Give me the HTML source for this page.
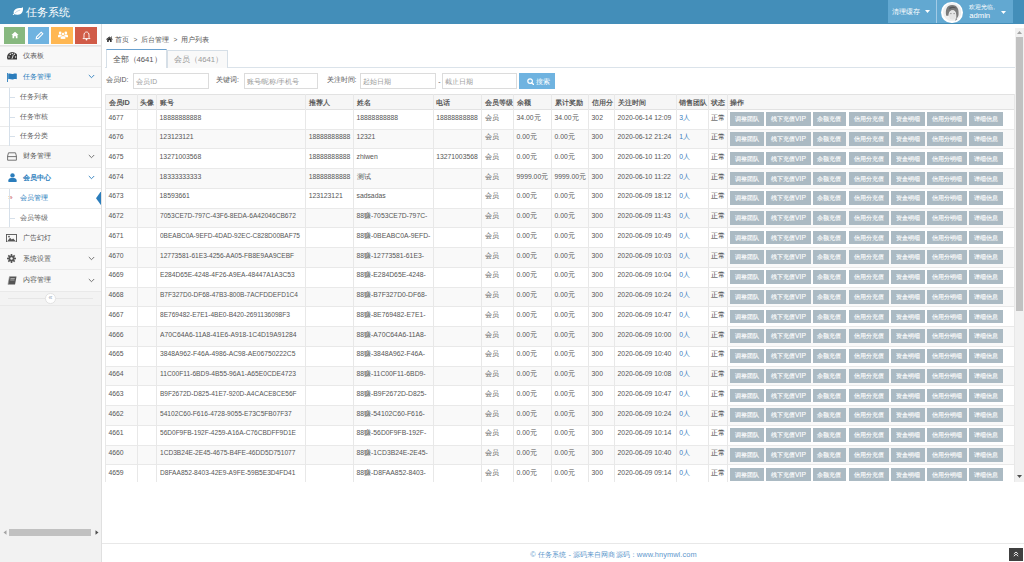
<!DOCTYPE html>
<html><head><meta charset="utf-8"><style>
*{box-sizing:border-box}
html,body{margin:0;padding:0;width:1024px;height:562px;overflow:hidden;background:#fff;font-family:"Liberation Sans",sans-serif;color:#393939}
.a{position:absolute}
#side{position:absolute;left:0;top:24px;width:102px;height:538px;background:#f2f2f2;border-right:1px solid #e0e0e0}
#clip{position:absolute;left:0;top:0;width:1015px;height:482px;overflow:hidden}
#vs{position:absolute;left:1015px;top:28px;width:9px;height:454px;background:#f1f1f1}
#vthumb{position:absolute;left:1px;top:9px;width:7px;height:273.6px;background:#c1c1c1}
#foot{position:absolute;left:102px;top:543px;width:922px;height:19px;border-top:1px solid #e8e8e8;background:#fff}
.th{position:absolute;left:105.5px;width:909.1px;background:#f6f6f6;border-top:1px solid #e2e2e2;border-bottom:1px solid #e2e2e2}
.tr{position:absolute;left:105.5px;width:909.1px;background:#fff;border-bottom:1px solid #e9e9e9}
.tr.odd{background:#f9f9f9}
.vl{position:absolute;width:1px;height:400px;background:#e8e8e8}
.c{font-size:6.5px}
.ch{font-size:6.5px}
.cb{font-size:6.2px}
.tht{position:absolute;font-size:7.3px;font-weight:bold;color:#555;white-space:nowrap}
.td{position:absolute;font-size:6.8px;line-height:8px;color:#555;white-space:nowrap}
.lnk{color:#3a7cc0}
.dk{color:#333}
.btn{position:absolute;height:13.7px;-webkit-text-stroke:0.12px #fff;background:#abbac3;color:#fff;font-size:6.7px;line-height:13.6px;text-align:center;white-space:nowrap}
.stx{position:absolute;font-size:6.9px;line-height:10px;white-space:nowrap}
.inp{border:1px solid #dcdcdc;background:#fff}
.ph{font-size:6.8px;line-height:9px;color:#999;white-space:nowrap}
.sep{display:inline-block;font-size:6.6px;margin:0 4.1px 0 4.2px;color:#555}
.lbl{font-size:6.9px;line-height:9px;color:#555;white-space:nowrap}
</style></head><body>
<div id="side"></div>
<div class="a" style="left:0;top:24px;width:101px;height:21.5px;background:#fdfdfd;border-bottom:1px solid #e3e3e3"></div>
<div class="a" style="left:4.1px;top:26.7px;width:21.4px;height:17px;background:#87b87f"></div>
<div class="a" style="left:27.9px;top:26.7px;width:21.6px;height:17px;background:#6fb3e0"></div>
<div class="a" style="left:51.2px;top:26.7px;width:21.7px;height:17px;background:#ffb752"></div>
<div class="a" style="left:75.1px;top:26.7px;width:21.9px;height:17px;background:#d15b47"></div>
<svg class="a" style="left:11px;top:31px" width="8" height="8" viewBox="0 0 8 8"><path d="M4 0.8 L7.6 4 H6.5 V7.2 H4.8 V5.2 H3.2 V7.2 H1.5 V4 H0.4 Z" fill="#fff"/></svg>
<svg class="a" style="left:34.5px;top:31px" width="9" height="9" viewBox="0 0 9 9"><path d="M1.2 7.8 L1.6 5.8 L6.2 1.2 L7.8 2.8 L3.2 7.4 Z" fill="none" stroke="#fff" stroke-width="1.1"/></svg>
<svg class="a" style="left:57.5px;top:30.8px" width="10" height="8.5" viewBox="0 0 10 8.5"><circle cx="2.2" cy="1.9" r="1.4" fill="#fff"/><circle cx="7.8" cy="1.9" r="1.4" fill="#fff"/><path d="M0 6.2 V4.8 C0 3.8 1 3.4 2.2 3.4 C3.4 3.4 4 3.8 4 4.8 V6.2 Z M6 6.2 V4.8 C6 3.8 6.6 3.4 7.8 3.4 C9 3.4 10 3.8 10 4.8 V6.2 Z" fill="#fff"/><circle cx="5" cy="3" r="1.6" fill="#fff" stroke="#ffb752" stroke-width="0.5"/><path d="M2.4 8.3 V6.6 C2.4 5.3 3.6 4.8 5 4.8 C6.4 4.8 7.6 5.3 7.6 6.6 V8.3 Z" fill="#fff" stroke="#ffb752" stroke-width="0.5"/></svg>
<svg class="a" style="left:81.5px;top:30.5px" width="9" height="10" viewBox="0 0 9 10"><path d="M4.5 1 C2.6 1 2 2.6 2 4.2 V6.4 L1 7.6 H8 L7 6.4 V4.2 C7 2.6 6.4 1 4.5 1 Z" fill="none" stroke="#fff" stroke-width="0.9"/><circle cx="4.5" cy="8.6" r="0.9" fill="#fff"/></svg>
<div class="a" style="left:0;top:45.6px;width:101px;height:20.7px;background:#f8f8f8;border-top:1px solid #ebebeb"></div>
<div class="stx" style="left:23.3px;top:51.0px;color:#585858;">仪表板</div>
<svg class="a" style="left:6.8px;top:52.4px" width="10.6" height="7.6" viewBox="0 0 10.6 7.6"><path d="M0.6 7.4 C0 6.4 0 5.8 0 5.3 A5.3 5.3 0 0 1 10.6 5.3 C10.6 5.8 10.6 6.4 10 7.4 Z" fill="#3d3d3d"/><circle cx="2" cy="5" r="0.75" fill="#eee"/><circle cx="3.3" cy="2.3" r="0.75" fill="#eee"/><circle cx="5.3" cy="1.5" r="0.7" fill="#eee"/><circle cx="7.3" cy="2.3" r="0.75" fill="#eee"/><circle cx="8.6" cy="5" r="0.75" fill="#eee"/><path d="M5 6.8 L6.3 3" stroke="#eee" stroke-width="0.9"/></svg>
<div class="a" style="left:0;top:66.3px;width:101px;height:21.0px;background:#f8f8f8;border-top:1px solid #ebebeb"></div>
<div class="stx" style="left:23.3px;top:71.8px;color:#2b7dbc;">任务管理</div>
<svg class="a" style="left:88px;top:74.3px" width="7" height="5" viewBox="0 0 7 5"><path d="M0.8 1 L3.5 3.7 L6.2 1" fill="none" stroke="#2b7dbc" stroke-width="0.9"/></svg>
<svg class="a" style="left:7.4px;top:72.8px" width="10" height="9" viewBox="0 0 10 9"><rect x="0" y="0" width="0.9" height="9" fill="#2b7dbc"/><path d="M1.2 0.8 C3 0 4.5 1.4 6 1 C7.5 0.6 8.5 0.4 9.8 0.8 V6.2 C8.5 5.8 7.5 6 6 6.4 C4.5 6.8 3 5.4 1.2 6.2 Z" fill="#2b7dbc"/></svg>
<div class="a" style="left:0;top:87.3px;width:101px;height:20.0px;background:#fff;border-top:1px solid #ebebeb"></div>
<div class="stx" style="left:20px;top:92.3px;color:#616161">任务列表</div>
<div class="a" style="left:9.9px;top:97.3px;width:5px;height:1px;background:#d6e0ea"></div>
<div class="a" style="left:0;top:107.3px;width:101px;height:18.7px;background:#fff;border-top:1px solid #ebebeb"></div>
<div class="stx" style="left:20px;top:111.7px;color:#616161">任务审核</div>
<div class="a" style="left:9.9px;top:116.7px;width:5px;height:1px;background:#d6e0ea"></div>
<div class="a" style="left:0;top:126.0px;width:101px;height:19.0px;background:#fff;border-top:1px solid #ebebeb"></div>
<div class="stx" style="left:20px;top:130.5px;color:#616161">任务分类</div>
<div class="a" style="left:9.9px;top:135.5px;width:5px;height:1px;background:#d6e0ea"></div>
<div class="a" style="left:0;top:145.0px;width:101px;height:22.0px;background:#f8f8f8;border-top:1px solid #ebebeb"></div>
<div class="stx" style="left:23.3px;top:151.0px;color:#585858;">财务管理</div>
<svg class="a" style="left:88px;top:153.5px" width="7" height="5" viewBox="0 0 7 5"><path d="M0.8 1 L3.5 3.7 L6.2 1" fill="none" stroke="#666" stroke-width="0.9"/></svg>
<svg class="a" style="left:7px;top:152.0px" width="10" height="9" viewBox="0 0 10 9"><path d="M1.5 0.8 H8.5 L9.4 4 V8.2 H0.6 V4 Z" fill="none" stroke="#666" stroke-width="0.9"/><path d="M0.6 4.6 H9.4" stroke="#666" stroke-width="0.9"/></svg>
<div class="a" style="left:0;top:167.0px;width:101px;height:21.0px;background:#fff;border-top:1px solid #ebebeb"></div>
<div class="stx" style="left:23.3px;top:172.5px;color:#2b7dbc;font-weight:bold">会员中心</div>
<svg class="a" style="left:88px;top:175.0px" width="7" height="5" viewBox="0 0 7 5"><path d="M0.8 1 L3.5 3.7 L6.2 1" fill="none" stroke="#2b7dbc" stroke-width="0.9"/></svg>
<svg class="a" style="left:7.5px;top:173.0px" width="9" height="9" viewBox="0 0 9 9"><circle cx="4.5" cy="2.4" r="2.2" fill="#2b7dbc"/><path d="M0.4 9 V7.2 C0.4 5.6 2 5 4.5 5 C7 5 8.6 5.6 8.6 7.2 V9 Z" fill="#2b7dbc"/></svg>
<div class="a" style="left:0;top:188.0px;width:101px;height:20.4px;background:#fff;border-top:1px solid #ebebeb"></div>
<div class="stx" style="left:20px;top:193.2px;color:#2b7dbc">会员管理</div>
<div class="a" style="left:8.2px;top:193.0px;font-size:8px;line-height:10px;color:#d0605a;font-family:'Liberation Sans',sans-serif">»</div>
<svg class="a" style="left:96px;top:191.0px" width="5.2" height="14.4" viewBox="0 0 5.2 14.4"><path d="M5.2 0 L0 7.2 L5.2 14.4 Z" fill="#2b7dbc"/></svg>
<div class="a" style="left:0;top:208.4px;width:101px;height:19.0px;background:#fff;border-top:1px solid #ebebeb"></div>
<div class="stx" style="left:20px;top:212.9px;color:#616161">会员等级</div>
<div class="a" style="left:9.9px;top:217.9px;width:5px;height:1px;background:#d6e0ea"></div>
<div class="a" style="left:0;top:227.4px;width:101px;height:20.8px;background:#f8f8f8;border-top:1px solid #ebebeb"></div>
<div class="stx" style="left:23.3px;top:232.8px;color:#585858;">广告幻灯</div>
<svg class="a" style="left:6.2px;top:233.8px" width="11" height="8.5" viewBox="0 0 11 8.5"><rect x="0.5" y="0.5" width="10" height="7.5" fill="none" stroke="#555" stroke-width="0.9"/><path d="M1.5 7 L4 3.8 L5.8 5.6 L7.2 4.4 L9.5 7 Z" fill="#555"/><circle cx="3" cy="2.6" r="0.9" fill="#555"/></svg>
<div class="a" style="left:0;top:248.2px;width:101px;height:21.0px;background:#f8f8f8;border-top:1px solid #ebebeb"></div>
<div class="stx" style="left:23.3px;top:253.7px;color:#585858;">系统设置</div>
<svg class="a" style="left:88px;top:256.2px" width="7" height="5" viewBox="0 0 7 5"><path d="M0.8 1 L3.5 3.7 L6.2 1" fill="none" stroke="#666" stroke-width="0.9"/></svg>
<svg class="a" style="left:7.3px;top:254.2px" width="9" height="9" viewBox="0 0 9 9"><g fill="#555"><circle cx="4.5" cy="4.5" r="3"/><rect x="3.7" y="0" width="1.6" height="9" transform="rotate(0 4.5 4.5)"/><rect x="3.7" y="0" width="1.6" height="9" transform="rotate(45 4.5 4.5)"/><rect x="3.7" y="0" width="1.6" height="9" transform="rotate(90 4.5 4.5)"/><rect x="3.7" y="0" width="1.6" height="9" transform="rotate(135 4.5 4.5)"/></g><circle cx="4.5" cy="4.5" r="1.2" fill="#f8f8f8"/></svg>
<div class="a" style="left:0;top:269.2px;width:101px;height:21.7px;background:#f8f8f8;border-top:1px solid #ebebeb"></div>
<div class="stx" style="left:23.3px;top:275.0px;color:#585858;">内容管理</div>
<svg class="a" style="left:88px;top:277.5px" width="7" height="5" viewBox="0 0 7 5"><path d="M0.8 1 L3.5 3.7 L6.2 1" fill="none" stroke="#666" stroke-width="0.9"/></svg>
<svg class="a" style="left:7px;top:275.5px" width="10" height="9" viewBox="0 0 10 9"><path d="M2.5 0.5 H9.5 L8 8.5 H1 Z" fill="#555"/><path d="M1 8.5 L2.5 0.5" stroke="#888" stroke-width="0.6"/><path d="M3.5 2.5 H7.8 M3.2 4 H7.5" stroke="#f8f8f8" stroke-width="0.5"/></svg>
<div class="a" style="left:9px;top:87.5px;width:1px;height:58px;background:#d6e0ea"></div>
<div class="a" style="left:9px;top:188.7px;width:1px;height:38.7px;background:#d6e0ea"></div>
<div class="a" style="left:0;top:290.9px;width:101px;height:15px;background:#f3f3f3;border-top:1px solid #e9e9e9;border-bottom:1px solid #e9e9e9"></div>
<div class="a" style="left:7.5px;top:298.3px;width:85.5px;height:1px;background:#e6e6e6"></div>
<div class="a" style="left:45.2px;top:293.3px;width:10.6px;height:10.6px;border-radius:50%;background:#fff;border:1px solid #e3e3e3;font-size:7px;line-height:8.4px;text-align:center;color:#9aa9b8">«</div>
<div class="a" style="left:9px;top:529.1px;width:81.8px;height:6.7px;background:#c1c1c1"></div>
<svg class="a" style="left:2.5px;top:530px" width="4" height="5" viewBox="0 0 4 5"><path d="M3.5 0.2 L0.5 2.5 L3.5 4.8 Z" fill="#a3a3a3"/></svg>
<svg class="a" style="left:94.5px;top:530px" width="4" height="5" viewBox="0 0 4 5"><path d="M0.5 0.2 L3.5 2.5 L0.5 4.8 Z" fill="#505050"/></svg>
<div id="clip">
<svg class="a" style="left:105.8px;top:35.8px" width="6.8" height="6" viewBox="0 0 7 6"><path d="M3.5 0.3 L7 3.3 L6.4 3.9 L3.5 1.4 L0.6 3.9 L0 3.3 Z M5.3 0.4 H6.1 V2 L5.3 1.4 Z M1.2 3.5 L3.5 1.8 L5.8 3.5 V6 H4.2 V4.3 H2.8 V6 H1.2 Z" fill="#2a2a2a"/></svg>
<div class="a" style="left:115.2px;top:35px;font-size:7.4px;line-height:9px;color:#555;white-space:nowrap">首页<span class="sep">&gt;</span>后台管理<span class="sep">&gt;</span>用户列表</div>
<div class="a" style="left:105px;top:67.2px;width:910px;height:1px;background:#dbe3ea"></div>
<div class="a" style="left:166.6px;top:50.2px;width:61.3px;height:17.5px;background:#f9f9f9;border:1px solid #d6dfe7;border-bottom:none"></div>
<div class="a" style="left:105.6px;top:49.2px;width:61.5px;height:19px;background:#fff;border:1px solid #d6dfe7;border-top:1.6px solid #6aa1cf;border-bottom:none"></div>
<div class="a" style="left:112.5px;top:54.6px;font-size:7.7px;line-height:9px;color:#555;white-space:nowrap">全部（4641）</div>
<div class="a" style="left:173.9px;top:54.6px;font-size:7.7px;line-height:9px;color:#999;white-space:nowrap">会员（4641）</div>
<div class="a lbl" style="left:105.6px;top:75.3px">会员ID:</div>
<div class="a inp" style="left:133.3px;top:73.2px;width:75.3px;height:15.5px"></div><div class="a ph" style="left:136.3px;top:76.6px">会员ID</div>
<div class="a lbl" style="left:216px;top:75.3px">关键词:</div>
<div class="a inp" style="left:243.6px;top:73.2px;width:74.9px;height:15.5px"></div><div class="a ph" style="left:246.6px;top:76.6px">账号/昵称/手机号</div>
<div class="a lbl" style="left:326.6px;top:75.3px">关注时间:</div>
<div class="a inp" style="left:360.3px;top:73.2px;width:75.4px;height:15.5px"></div><div class="a ph" style="left:363.3px;top:76.6px">起始日期</div>
<div class="a lbl" style="left:438.2px;top:77px">-</div>
<div class="a inp" style="left:442.3px;top:73.2px;width:74.9px;height:15.5px"></div><div class="a ph" style="left:445.3px;top:76.6px">截止日期</div>
<div class="a" style="left:519.2px;top:73.2px;width:35.5px;height:15.5px;background:#6fb3e0"></div>
<svg class="a" style="left:526.5px;top:77.5px" width="7.6" height="7.6" viewBox="0 0 7.6 7.6"><circle cx="3.1" cy="3.1" r="2.3" fill="none" stroke="#fff" stroke-width="1.2"/><path d="M4.8 4.8 L7 7" stroke="#fff" stroke-width="1.4" stroke-linecap="round"/></svg>
<div class="a" style="left:535.8px;top:76.6px;font-size:6.9px;line-height:9px;color:#fff;white-space:nowrap">搜索</div>
<div class="th" style="top:94px;height:16px"></div>
<div class="tr" style="top:110.00px;height:19.74px"></div>
<div class="tr odd" style="top:129.74px;height:19.74px"></div>
<div class="tr" style="top:149.48px;height:19.74px"></div>
<div class="tr odd" style="top:169.22px;height:19.74px"></div>
<div class="tr" style="top:188.96px;height:19.74px"></div>
<div class="tr odd" style="top:208.70px;height:19.74px"></div>
<div class="tr" style="top:228.44px;height:19.74px"></div>
<div class="tr odd" style="top:248.18px;height:19.74px"></div>
<div class="tr" style="top:267.92px;height:19.74px"></div>
<div class="tr odd" style="top:287.66px;height:19.74px"></div>
<div class="tr" style="top:307.40px;height:19.74px"></div>
<div class="tr odd" style="top:327.14px;height:19.74px"></div>
<div class="tr" style="top:346.88px;height:19.74px"></div>
<div class="tr odd" style="top:366.62px;height:19.74px"></div>
<div class="tr" style="top:386.36px;height:19.74px"></div>
<div class="tr odd" style="top:406.10px;height:19.74px"></div>
<div class="tr" style="top:425.84px;height:19.74px"></div>
<div class="tr odd" style="top:445.58px;height:19.74px"></div>
<div class="tr" style="top:465.32px;height:19.74px"></div>
<div class="vl" style="left:105.0px;top:94px"></div>
<div class="vl" style="left:136.9px;top:94px"></div>
<div class="vl" style="left:156.1px;top:94px"></div>
<div class="vl" style="left:305.2px;top:94px"></div>
<div class="vl" style="left:353.0px;top:94px"></div>
<div class="vl" style="left:432.7px;top:94px"></div>
<div class="vl" style="left:481.3px;top:94px"></div>
<div class="vl" style="left:513.1px;top:94px"></div>
<div class="vl" style="left:551.0px;top:94px"></div>
<div class="vl" style="left:588.1px;top:94px"></div>
<div class="vl" style="left:614.1px;top:94px"></div>
<div class="vl" style="left:675.7px;top:94px"></div>
<div class="vl" style="left:707.9px;top:94px"></div>
<div class="vl" style="left:726.8px;top:94px"></div>
<div class="vl" style="left:1014.1px;top:94px"></div>
<div class="tht" style="left:108.5px;top:94.5px;height:16px;line-height:16px"><span class="ch">会员</span>ID</div>
<div class="tht" style="left:140.4px;top:94.5px;height:16px;line-height:16px"><span class="ch">头像</span></div>
<div class="tht" style="left:159.6px;top:94.5px;height:16px;line-height:16px"><span class="ch">账号</span></div>
<div class="tht" style="left:308.7px;top:94.5px;height:16px;line-height:16px"><span class="ch">推荐人</span></div>
<div class="tht" style="left:356.5px;top:94.5px;height:16px;line-height:16px"><span class="ch">姓名</span></div>
<div class="tht" style="left:436.2px;top:94.5px;height:16px;line-height:16px"><span class="ch">电话</span></div>
<div class="tht" style="left:484.8px;top:94.5px;height:16px;line-height:16px"><span class="ch">会员等级</span></div>
<div class="tht" style="left:516.6px;top:94.5px;height:16px;line-height:16px"><span class="ch">余额</span></div>
<div class="tht" style="left:554.5px;top:94.5px;height:16px;line-height:16px"><span class="ch">累计奖励</span></div>
<div class="tht" style="left:591.6px;top:94.5px;height:16px;line-height:16px"><span class="ch">信用分</span></div>
<div class="tht" style="left:617.6px;top:94.5px;height:16px;line-height:16px"><span class="ch">关注时间</span></div>
<div class="tht" style="left:679.2px;top:94.5px;height:16px;line-height:16px"><span class="ch">销售团队</span></div>
<div class="tht" style="left:711.4px;top:94.5px;height:16px;line-height:16px"><span class="ch">状态</span></div>
<div class="tht" style="left:730.3px;top:94.5px;height:16px;line-height:16px"><span class="ch">操作</span></div>
<div class="td" style="left:108.5px;top:113.50px;">4677</div>
<div class="td" style="left:159.6px;top:113.50px;">18888888888</div>
<div class="td" style="left:356.5px;top:113.50px;">18888888888</div>
<div class="td" style="left:436.2px;top:113.50px;">18888888888</div>
<div class="td" style="left:484.8px;top:113.50px;"><span class="c">会员</span></div>
<div class="td" style="left:516.6px;top:113.50px;">34.00<span class="c">元</span></div>
<div class="td" style="left:554.5px;top:113.50px;">34.00<span class="c">元</span></div>
<div class="td" style="left:591.6px;top:113.50px;">302</div>
<div class="td" style="left:617.6px;top:113.50px;">2020-06-14 12:09</div>
<div class="td lnk" style="left:679.2px;top:113.50px;">3<span class="c">人</span></div>
<div class="td dk" style="left:711.4px;top:113.50px;"><span class="c">正常</span></div>
<div class="btn" style="left:730.2px;top:112.30px;width:33.9px"><span class="cb">调整团队</span></div>
<div class="btn" style="left:766.4px;top:112.30px;width:44.2px"><span class="cb">线下充值</span>VIP</div>
<div class="btn" style="left:812.5px;top:112.30px;width:33.8px"><span class="cb">余额充值</span></div>
<div class="btn" style="left:848.6px;top:112.30px;width:40.2px"><span class="cb">信用分充值</span></div>
<div class="btn" style="left:891.0px;top:112.30px;width:33.9px"><span class="cb">资金明细</span></div>
<div class="btn" style="left:927.1px;top:112.30px;width:39.9px"><span class="cb">信用分明细</span></div>
<div class="btn" style="left:969.2px;top:112.30px;width:33.9px"><span class="cb">详细信息</span></div>
<div class="td" style="left:108.5px;top:133.24px;">4676</div>
<div class="td" style="left:159.6px;top:133.24px;">123123121</div>
<div class="td" style="left:308.7px;top:133.24px;">18888888888</div>
<div class="td" style="left:356.5px;top:133.24px;">12321</div>
<div class="td" style="left:484.8px;top:133.24px;"><span class="c">会员</span></div>
<div class="td" style="left:516.6px;top:133.24px;">0.00<span class="c">元</span></div>
<div class="td" style="left:554.5px;top:133.24px;">0.00<span class="c">元</span></div>
<div class="td" style="left:591.6px;top:133.24px;">300</div>
<div class="td" style="left:617.6px;top:133.24px;">2020-06-12 21:24</div>
<div class="td lnk" style="left:679.2px;top:133.24px;">1<span class="c">人</span></div>
<div class="td dk" style="left:711.4px;top:133.24px;"><span class="c">正常</span></div>
<div class="btn" style="left:730.2px;top:132.04px;width:33.9px"><span class="cb">调整团队</span></div>
<div class="btn" style="left:766.4px;top:132.04px;width:44.2px"><span class="cb">线下充值</span>VIP</div>
<div class="btn" style="left:812.5px;top:132.04px;width:33.8px"><span class="cb">余额充值</span></div>
<div class="btn" style="left:848.6px;top:132.04px;width:40.2px"><span class="cb">信用分充值</span></div>
<div class="btn" style="left:891.0px;top:132.04px;width:33.9px"><span class="cb">资金明细</span></div>
<div class="btn" style="left:927.1px;top:132.04px;width:39.9px"><span class="cb">信用分明细</span></div>
<div class="btn" style="left:969.2px;top:132.04px;width:33.9px"><span class="cb">详细信息</span></div>
<div class="td" style="left:108.5px;top:152.98px;">4675</div>
<div class="td" style="left:159.6px;top:152.98px;">13271003568</div>
<div class="td" style="left:308.7px;top:152.98px;">18888888888</div>
<div class="td" style="left:356.5px;top:152.98px;">zhiwen</div>
<div class="td" style="left:436.2px;top:152.98px;">13271003568</div>
<div class="td" style="left:484.8px;top:152.98px;"><span class="c">会员</span></div>
<div class="td" style="left:516.6px;top:152.98px;">0.00<span class="c">元</span></div>
<div class="td" style="left:554.5px;top:152.98px;">0.00<span class="c">元</span></div>
<div class="td" style="left:591.6px;top:152.98px;">300</div>
<div class="td" style="left:617.6px;top:152.98px;">2020-06-10 11:20</div>
<div class="td lnk" style="left:679.2px;top:152.98px;">0<span class="c">人</span></div>
<div class="td dk" style="left:711.4px;top:152.98px;"><span class="c">正常</span></div>
<div class="btn" style="left:730.2px;top:151.78px;width:33.9px"><span class="cb">调整团队</span></div>
<div class="btn" style="left:766.4px;top:151.78px;width:44.2px"><span class="cb">线下充值</span>VIP</div>
<div class="btn" style="left:812.5px;top:151.78px;width:33.8px"><span class="cb">余额充值</span></div>
<div class="btn" style="left:848.6px;top:151.78px;width:40.2px"><span class="cb">信用分充值</span></div>
<div class="btn" style="left:891.0px;top:151.78px;width:33.9px"><span class="cb">资金明细</span></div>
<div class="btn" style="left:927.1px;top:151.78px;width:39.9px"><span class="cb">信用分明细</span></div>
<div class="btn" style="left:969.2px;top:151.78px;width:33.9px"><span class="cb">详细信息</span></div>
<div class="td" style="left:108.5px;top:172.72px;">4674</div>
<div class="td" style="left:159.6px;top:172.72px;">18333333333</div>
<div class="td" style="left:308.7px;top:172.72px;">18888888888</div>
<div class="td" style="left:356.5px;top:172.72px;"><span class="c">测试</span></div>
<div class="td" style="left:484.8px;top:172.72px;"><span class="c">会员</span></div>
<div class="td" style="left:516.6px;top:172.72px;">9999.00<span class="c">元</span></div>
<div class="td" style="left:554.5px;top:172.72px;">9999.00<span class="c">元</span></div>
<div class="td" style="left:591.6px;top:172.72px;">300</div>
<div class="td" style="left:617.6px;top:172.72px;">2020-06-10 11:22</div>
<div class="td lnk" style="left:679.2px;top:172.72px;">0<span class="c">人</span></div>
<div class="td dk" style="left:711.4px;top:172.72px;"><span class="c">正常</span></div>
<div class="btn" style="left:730.2px;top:171.52px;width:33.9px"><span class="cb">调整团队</span></div>
<div class="btn" style="left:766.4px;top:171.52px;width:44.2px"><span class="cb">线下充值</span>VIP</div>
<div class="btn" style="left:812.5px;top:171.52px;width:33.8px"><span class="cb">余额充值</span></div>
<div class="btn" style="left:848.6px;top:171.52px;width:40.2px"><span class="cb">信用分充值</span></div>
<div class="btn" style="left:891.0px;top:171.52px;width:33.9px"><span class="cb">资金明细</span></div>
<div class="btn" style="left:927.1px;top:171.52px;width:39.9px"><span class="cb">信用分明细</span></div>
<div class="btn" style="left:969.2px;top:171.52px;width:33.9px"><span class="cb">详细信息</span></div>
<div class="td" style="left:108.5px;top:192.46px;">4673</div>
<div class="td" style="left:159.6px;top:192.46px;">18593661</div>
<div class="td" style="left:308.7px;top:192.46px;">123123121</div>
<div class="td" style="left:356.5px;top:192.46px;">sadsadas</div>
<div class="td" style="left:484.8px;top:192.46px;"><span class="c">会员</span></div>
<div class="td" style="left:516.6px;top:192.46px;">0.00<span class="c">元</span></div>
<div class="td" style="left:554.5px;top:192.46px;">0.00<span class="c">元</span></div>
<div class="td" style="left:591.6px;top:192.46px;">300</div>
<div class="td" style="left:617.6px;top:192.46px;">2020-06-09 18:12</div>
<div class="td lnk" style="left:679.2px;top:192.46px;">0<span class="c">人</span></div>
<div class="td dk" style="left:711.4px;top:192.46px;"><span class="c">正常</span></div>
<div class="btn" style="left:730.2px;top:191.26px;width:33.9px"><span class="cb">调整团队</span></div>
<div class="btn" style="left:766.4px;top:191.26px;width:44.2px"><span class="cb">线下充值</span>VIP</div>
<div class="btn" style="left:812.5px;top:191.26px;width:33.8px"><span class="cb">余额充值</span></div>
<div class="btn" style="left:848.6px;top:191.26px;width:40.2px"><span class="cb">信用分充值</span></div>
<div class="btn" style="left:891.0px;top:191.26px;width:33.9px"><span class="cb">资金明细</span></div>
<div class="btn" style="left:927.1px;top:191.26px;width:39.9px"><span class="cb">信用分明细</span></div>
<div class="btn" style="left:969.2px;top:191.26px;width:33.9px"><span class="cb">详细信息</span></div>
<div class="td" style="left:108.5px;top:212.20px;">4672</div>
<div class="td" style="left:159.6px;top:212.20px;transform:scaleX(0.972);transform-origin:0 0;">7053CE7D-797C-43F6-8EDA-6A42046CB672</div>
<div class="td" style="left:356.5px;top:212.20px;">88<span class="c">赚</span>-7053CE7D-797C-</div>
<div class="td" style="left:484.8px;top:212.20px;"><span class="c">会员</span></div>
<div class="td" style="left:516.6px;top:212.20px;">0.00<span class="c">元</span></div>
<div class="td" style="left:554.5px;top:212.20px;">0.00<span class="c">元</span></div>
<div class="td" style="left:591.6px;top:212.20px;">300</div>
<div class="td" style="left:617.6px;top:212.20px;">2020-06-09 11:43</div>
<div class="td lnk" style="left:679.2px;top:212.20px;">0<span class="c">人</span></div>
<div class="td dk" style="left:711.4px;top:212.20px;"><span class="c">正常</span></div>
<div class="btn" style="left:730.2px;top:211.00px;width:33.9px"><span class="cb">调整团队</span></div>
<div class="btn" style="left:766.4px;top:211.00px;width:44.2px"><span class="cb">线下充值</span>VIP</div>
<div class="btn" style="left:812.5px;top:211.00px;width:33.8px"><span class="cb">余额充值</span></div>
<div class="btn" style="left:848.6px;top:211.00px;width:40.2px"><span class="cb">信用分充值</span></div>
<div class="btn" style="left:891.0px;top:211.00px;width:33.9px"><span class="cb">资金明细</span></div>
<div class="btn" style="left:927.1px;top:211.00px;width:39.9px"><span class="cb">信用分明细</span></div>
<div class="btn" style="left:969.2px;top:211.00px;width:33.9px"><span class="cb">详细信息</span></div>
<div class="td" style="left:108.5px;top:231.94px;">4671</div>
<div class="td" style="left:159.6px;top:231.94px;transform:scaleX(0.9569);transform-origin:0 0;">0BEABC0A-9EFD-4DAD-92EC-C828D00BAF75</div>
<div class="td" style="left:356.5px;top:231.94px;">88<span class="c">赚</span>-0BEABC0A-9EFD-</div>
<div class="td" style="left:484.8px;top:231.94px;"><span class="c">会员</span></div>
<div class="td" style="left:516.6px;top:231.94px;">0.00<span class="c">元</span></div>
<div class="td" style="left:554.5px;top:231.94px;">0.00<span class="c">元</span></div>
<div class="td" style="left:591.6px;top:231.94px;">300</div>
<div class="td" style="left:617.6px;top:231.94px;">2020-06-09 10:49</div>
<div class="td lnk" style="left:679.2px;top:231.94px;">0<span class="c">人</span></div>
<div class="td dk" style="left:711.4px;top:231.94px;"><span class="c">正常</span></div>
<div class="btn" style="left:730.2px;top:230.74px;width:33.9px"><span class="cb">调整团队</span></div>
<div class="btn" style="left:766.4px;top:230.74px;width:44.2px"><span class="cb">线下充值</span>VIP</div>
<div class="btn" style="left:812.5px;top:230.74px;width:33.8px"><span class="cb">余额充值</span></div>
<div class="btn" style="left:848.6px;top:230.74px;width:40.2px"><span class="cb">信用分充值</span></div>
<div class="btn" style="left:891.0px;top:230.74px;width:33.9px"><span class="cb">资金明细</span></div>
<div class="btn" style="left:927.1px;top:230.74px;width:39.9px"><span class="cb">信用分明细</span></div>
<div class="btn" style="left:969.2px;top:230.74px;width:33.9px"><span class="cb">详细信息</span></div>
<div class="td" style="left:108.5px;top:251.68px;">4670</div>
<div class="td" style="left:159.6px;top:251.68px;transform:scaleX(0.967);transform-origin:0 0;">12773581-61E3-4256-AA05-FB8E9AA9CEBF</div>
<div class="td" style="left:356.5px;top:251.68px;">88<span class="c">赚</span>-12773581-61E3-</div>
<div class="td" style="left:484.8px;top:251.68px;"><span class="c">会员</span></div>
<div class="td" style="left:516.6px;top:251.68px;">0.00<span class="c">元</span></div>
<div class="td" style="left:554.5px;top:251.68px;">0.00<span class="c">元</span></div>
<div class="td" style="left:591.6px;top:251.68px;">300</div>
<div class="td" style="left:617.6px;top:251.68px;">2020-06-09 10:03</div>
<div class="td lnk" style="left:679.2px;top:251.68px;">0<span class="c">人</span></div>
<div class="td dk" style="left:711.4px;top:251.68px;"><span class="c">正常</span></div>
<div class="btn" style="left:730.2px;top:250.48px;width:33.9px"><span class="cb">调整团队</span></div>
<div class="btn" style="left:766.4px;top:250.48px;width:44.2px"><span class="cb">线下充值</span>VIP</div>
<div class="btn" style="left:812.5px;top:250.48px;width:33.8px"><span class="cb">余额充值</span></div>
<div class="btn" style="left:848.6px;top:250.48px;width:40.2px"><span class="cb">信用分充值</span></div>
<div class="btn" style="left:891.0px;top:250.48px;width:33.9px"><span class="cb">资金明细</span></div>
<div class="btn" style="left:927.1px;top:250.48px;width:39.9px"><span class="cb">信用分明细</span></div>
<div class="btn" style="left:969.2px;top:250.48px;width:33.9px"><span class="cb">详细信息</span></div>
<div class="td" style="left:108.5px;top:271.42px;">4669</div>
<div class="td" style="left:159.6px;top:271.42px;transform:scaleX(0.9759);transform-origin:0 0;">E284D65E-4248-4F26-A9EA-48447A1A3C53</div>
<div class="td" style="left:356.5px;top:271.42px;">88<span class="c">赚</span>-E284D65E-4248-</div>
<div class="td" style="left:484.8px;top:271.42px;"><span class="c">会员</span></div>
<div class="td" style="left:516.6px;top:271.42px;">0.00<span class="c">元</span></div>
<div class="td" style="left:554.5px;top:271.42px;">0.00<span class="c">元</span></div>
<div class="td" style="left:591.6px;top:271.42px;">300</div>
<div class="td" style="left:617.6px;top:271.42px;">2020-06-09 10:04</div>
<div class="td lnk" style="left:679.2px;top:271.42px;">0<span class="c">人</span></div>
<div class="td dk" style="left:711.4px;top:271.42px;"><span class="c">正常</span></div>
<div class="btn" style="left:730.2px;top:270.22px;width:33.9px"><span class="cb">调整团队</span></div>
<div class="btn" style="left:766.4px;top:270.22px;width:44.2px"><span class="cb">线下充值</span>VIP</div>
<div class="btn" style="left:812.5px;top:270.22px;width:33.8px"><span class="cb">余额充值</span></div>
<div class="btn" style="left:848.6px;top:270.22px;width:40.2px"><span class="cb">信用分充值</span></div>
<div class="btn" style="left:891.0px;top:270.22px;width:33.9px"><span class="cb">资金明细</span></div>
<div class="btn" style="left:927.1px;top:270.22px;width:39.9px"><span class="cb">信用分明细</span></div>
<div class="btn" style="left:969.2px;top:270.22px;width:33.9px"><span class="cb">详细信息</span></div>
<div class="td" style="left:108.5px;top:291.16px;">4668</div>
<div class="td" style="left:159.6px;top:291.16px;transform:scaleX(0.9632);transform-origin:0 0;">B7F327D0-DF68-47B3-800B-7ACFDDEFD1C4</div>
<div class="td" style="left:356.5px;top:291.16px;">88<span class="c">赚</span>-B7F327D0-DF68-</div>
<div class="td" style="left:484.8px;top:291.16px;"><span class="c">会员</span></div>
<div class="td" style="left:516.6px;top:291.16px;">0.00<span class="c">元</span></div>
<div class="td" style="left:554.5px;top:291.16px;">0.00<span class="c">元</span></div>
<div class="td" style="left:591.6px;top:291.16px;">300</div>
<div class="td" style="left:617.6px;top:291.16px;">2020-06-09 10:24</div>
<div class="td lnk" style="left:679.2px;top:291.16px;">0<span class="c">人</span></div>
<div class="td dk" style="left:711.4px;top:291.16px;"><span class="c">正常</span></div>
<div class="btn" style="left:730.2px;top:289.96px;width:33.9px"><span class="cb">调整团队</span></div>
<div class="btn" style="left:766.4px;top:289.96px;width:44.2px"><span class="cb">线下充值</span>VIP</div>
<div class="btn" style="left:812.5px;top:289.96px;width:33.8px"><span class="cb">余额充值</span></div>
<div class="btn" style="left:848.6px;top:289.96px;width:40.2px"><span class="cb">信用分充值</span></div>
<div class="btn" style="left:891.0px;top:289.96px;width:33.9px"><span class="cb">资金明细</span></div>
<div class="btn" style="left:927.1px;top:289.96px;width:39.9px"><span class="cb">信用分明细</span></div>
<div class="btn" style="left:969.2px;top:289.96px;width:33.9px"><span class="cb">详细信息</span></div>
<div class="td" style="left:108.5px;top:310.90px;">4667</div>
<div class="td" style="left:159.6px;top:310.90px;transform:scaleX(0.9665);transform-origin:0 0;">8E769482-E7E1-4BE0-B420-2691136098F3</div>
<div class="td" style="left:356.5px;top:310.90px;">88<span class="c">赚</span>-8E769482-E7E1-</div>
<div class="td" style="left:484.8px;top:310.90px;"><span class="c">会员</span></div>
<div class="td" style="left:516.6px;top:310.90px;">0.00<span class="c">元</span></div>
<div class="td" style="left:554.5px;top:310.90px;">0.00<span class="c">元</span></div>
<div class="td" style="left:591.6px;top:310.90px;">300</div>
<div class="td" style="left:617.6px;top:310.90px;">2020-06-09 10:47</div>
<div class="td lnk" style="left:679.2px;top:310.90px;">0<span class="c">人</span></div>
<div class="td dk" style="left:711.4px;top:310.90px;"><span class="c">正常</span></div>
<div class="btn" style="left:730.2px;top:309.70px;width:33.9px"><span class="cb">调整团队</span></div>
<div class="btn" style="left:766.4px;top:309.70px;width:44.2px"><span class="cb">线下充值</span>VIP</div>
<div class="btn" style="left:812.5px;top:309.70px;width:33.8px"><span class="cb">余额充值</span></div>
<div class="btn" style="left:848.6px;top:309.70px;width:40.2px"><span class="cb">信用分充值</span></div>
<div class="btn" style="left:891.0px;top:309.70px;width:33.9px"><span class="cb">资金明细</span></div>
<div class="btn" style="left:927.1px;top:309.70px;width:39.9px"><span class="cb">信用分明细</span></div>
<div class="btn" style="left:969.2px;top:309.70px;width:33.9px"><span class="cb">详细信息</span></div>
<div class="td" style="left:108.5px;top:330.64px;">4666</div>
<div class="td" style="left:159.6px;top:330.64px;transform:scaleX(0.994);transform-origin:0 0;">A70C64A6-11A8-41E6-A918-1C4D19A91284</div>
<div class="td" style="left:356.5px;top:330.64px;">88<span class="c">赚</span>-A70C64A6-11A8-</div>
<div class="td" style="left:484.8px;top:330.64px;"><span class="c">会员</span></div>
<div class="td" style="left:516.6px;top:330.64px;">0.00<span class="c">元</span></div>
<div class="td" style="left:554.5px;top:330.64px;">0.00<span class="c">元</span></div>
<div class="td" style="left:591.6px;top:330.64px;">300</div>
<div class="td" style="left:617.6px;top:330.64px;">2020-06-09 10:00</div>
<div class="td lnk" style="left:679.2px;top:330.64px;">0<span class="c">人</span></div>
<div class="td dk" style="left:711.4px;top:330.64px;"><span class="c">正常</span></div>
<div class="btn" style="left:730.2px;top:329.44px;width:33.9px"><span class="cb">调整团队</span></div>
<div class="btn" style="left:766.4px;top:329.44px;width:44.2px"><span class="cb">线下充值</span>VIP</div>
<div class="btn" style="left:812.5px;top:329.44px;width:33.8px"><span class="cb">余额充值</span></div>
<div class="btn" style="left:848.6px;top:329.44px;width:40.2px"><span class="cb">信用分充值</span></div>
<div class="btn" style="left:891.0px;top:329.44px;width:33.9px"><span class="cb">资金明细</span></div>
<div class="btn" style="left:927.1px;top:329.44px;width:39.9px"><span class="cb">信用分明细</span></div>
<div class="btn" style="left:969.2px;top:329.44px;width:33.9px"><span class="cb">详细信息</span></div>
<div class="td" style="left:108.5px;top:350.38px;">4665</div>
<div class="td" style="left:159.6px;top:350.38px;transform:scaleX(0.9925);transform-origin:0 0;">3848A962-F46A-4986-AC98-AE06750222C5</div>
<div class="td" style="left:356.5px;top:350.38px;">88<span class="c">赚</span>-3848A962-F46A-</div>
<div class="td" style="left:484.8px;top:350.38px;"><span class="c">会员</span></div>
<div class="td" style="left:516.6px;top:350.38px;">0.00<span class="c">元</span></div>
<div class="td" style="left:554.5px;top:350.38px;">0.00<span class="c">元</span></div>
<div class="td" style="left:591.6px;top:350.38px;">300</div>
<div class="td" style="left:617.6px;top:350.38px;">2020-06-09 10:40</div>
<div class="td lnk" style="left:679.2px;top:350.38px;">0<span class="c">人</span></div>
<div class="td dk" style="left:711.4px;top:350.38px;"><span class="c">正常</span></div>
<div class="btn" style="left:730.2px;top:349.18px;width:33.9px"><span class="cb">调整团队</span></div>
<div class="btn" style="left:766.4px;top:349.18px;width:44.2px"><span class="cb">线下充值</span>VIP</div>
<div class="btn" style="left:812.5px;top:349.18px;width:33.8px"><span class="cb">余额充值</span></div>
<div class="btn" style="left:848.6px;top:349.18px;width:40.2px"><span class="cb">信用分充值</span></div>
<div class="btn" style="left:891.0px;top:349.18px;width:33.9px"><span class="cb">资金明细</span></div>
<div class="btn" style="left:927.1px;top:349.18px;width:39.9px"><span class="cb">信用分明细</span></div>
<div class="btn" style="left:969.2px;top:349.18px;width:33.9px"><span class="cb">详细信息</span></div>
<div class="td" style="left:108.5px;top:370.12px;">4664</div>
<div class="td" style="left:159.6px;top:370.12px;transform:scaleX(0.9818);transform-origin:0 0;">11C00F11-6BD9-4B55-96A1-A65E0CDE4723</div>
<div class="td" style="left:356.5px;top:370.12px;">88<span class="c">赚</span>-11C00F11-6BD9-</div>
<div class="td" style="left:484.8px;top:370.12px;"><span class="c">会员</span></div>
<div class="td" style="left:516.6px;top:370.12px;">0.00<span class="c">元</span></div>
<div class="td" style="left:554.5px;top:370.12px;">0.00<span class="c">元</span></div>
<div class="td" style="left:591.6px;top:370.12px;">300</div>
<div class="td" style="left:617.6px;top:370.12px;">2020-06-09 10:08</div>
<div class="td lnk" style="left:679.2px;top:370.12px;">0<span class="c">人</span></div>
<div class="td dk" style="left:711.4px;top:370.12px;"><span class="c">正常</span></div>
<div class="btn" style="left:730.2px;top:368.92px;width:33.9px"><span class="cb">调整团队</span></div>
<div class="btn" style="left:766.4px;top:368.92px;width:44.2px"><span class="cb">线下充值</span>VIP</div>
<div class="btn" style="left:812.5px;top:368.92px;width:33.8px"><span class="cb">余额充值</span></div>
<div class="btn" style="left:848.6px;top:368.92px;width:40.2px"><span class="cb">信用分充值</span></div>
<div class="btn" style="left:891.0px;top:368.92px;width:33.9px"><span class="cb">资金明细</span></div>
<div class="btn" style="left:927.1px;top:368.92px;width:39.9px"><span class="cb">信用分明细</span></div>
<div class="btn" style="left:969.2px;top:368.92px;width:33.9px"><span class="cb">详细信息</span></div>
<div class="td" style="left:108.5px;top:389.86px;">4663</div>
<div class="td" style="left:159.6px;top:389.86px;transform:scaleX(0.9615);transform-origin:0 0;">B9F2672D-D825-41E7-920D-A4CACE8CE56F</div>
<div class="td" style="left:356.5px;top:389.86px;">88<span class="c">赚</span>-B9F2672D-D825-</div>
<div class="td" style="left:484.8px;top:389.86px;"><span class="c">会员</span></div>
<div class="td" style="left:516.6px;top:389.86px;">0.00<span class="c">元</span></div>
<div class="td" style="left:554.5px;top:389.86px;">0.00<span class="c">元</span></div>
<div class="td" style="left:591.6px;top:389.86px;">300</div>
<div class="td" style="left:617.6px;top:389.86px;">2020-06-09 10:47</div>
<div class="td lnk" style="left:679.2px;top:389.86px;">0<span class="c">人</span></div>
<div class="td dk" style="left:711.4px;top:389.86px;"><span class="c">正常</span></div>
<div class="btn" style="left:730.2px;top:388.66px;width:33.9px"><span class="cb">调整团队</span></div>
<div class="btn" style="left:766.4px;top:388.66px;width:44.2px"><span class="cb">线下充值</span>VIP</div>
<div class="btn" style="left:812.5px;top:388.66px;width:33.8px"><span class="cb">余额充值</span></div>
<div class="btn" style="left:848.6px;top:388.66px;width:40.2px"><span class="cb">信用分充值</span></div>
<div class="btn" style="left:891.0px;top:388.66px;width:33.9px"><span class="cb">资金明细</span></div>
<div class="btn" style="left:927.1px;top:388.66px;width:39.9px"><span class="cb">信用分明细</span></div>
<div class="btn" style="left:969.2px;top:388.66px;width:33.9px"><span class="cb">详细信息</span></div>
<div class="td" style="left:108.5px;top:409.60px;">4662</div>
<div class="td" style="left:159.6px;top:409.60px;transform:scaleX(0.9755);transform-origin:0 0;">54102C60-F616-4728-9055-E73C5FB07F37</div>
<div class="td" style="left:356.5px;top:409.60px;">88<span class="c">赚</span>-54102C60-F616-</div>
<div class="td" style="left:484.8px;top:409.60px;"><span class="c">会员</span></div>
<div class="td" style="left:516.6px;top:409.60px;">0.00<span class="c">元</span></div>
<div class="td" style="left:554.5px;top:409.60px;">0.00<span class="c">元</span></div>
<div class="td" style="left:591.6px;top:409.60px;">300</div>
<div class="td" style="left:617.6px;top:409.60px;">2020-06-09 10:24</div>
<div class="td lnk" style="left:679.2px;top:409.60px;">0<span class="c">人</span></div>
<div class="td dk" style="left:711.4px;top:409.60px;"><span class="c">正常</span></div>
<div class="btn" style="left:730.2px;top:408.40px;width:33.9px"><span class="cb">调整团队</span></div>
<div class="btn" style="left:766.4px;top:408.40px;width:44.2px"><span class="cb">线下充值</span>VIP</div>
<div class="btn" style="left:812.5px;top:408.40px;width:33.8px"><span class="cb">余额充值</span></div>
<div class="btn" style="left:848.6px;top:408.40px;width:40.2px"><span class="cb">信用分充值</span></div>
<div class="btn" style="left:891.0px;top:408.40px;width:33.9px"><span class="cb">资金明细</span></div>
<div class="btn" style="left:927.1px;top:408.40px;width:39.9px"><span class="cb">信用分明细</span></div>
<div class="btn" style="left:969.2px;top:408.40px;width:33.9px"><span class="cb">详细信息</span></div>
<div class="td" style="left:108.5px;top:429.34px;">4661</div>
<div class="td" style="left:159.6px;top:429.34px;transform:scaleX(0.9618);transform-origin:0 0;">56D0F9FB-192F-4259-A16A-C76CBDFF9D1E</div>
<div class="td" style="left:356.5px;top:429.34px;">88<span class="c">赚</span>-56D0F9FB-192F-</div>
<div class="td" style="left:484.8px;top:429.34px;"><span class="c">会员</span></div>
<div class="td" style="left:516.6px;top:429.34px;">0.00<span class="c">元</span></div>
<div class="td" style="left:554.5px;top:429.34px;">0.00<span class="c">元</span></div>
<div class="td" style="left:591.6px;top:429.34px;">300</div>
<div class="td" style="left:617.6px;top:429.34px;">2020-06-09 10:14</div>
<div class="td lnk" style="left:679.2px;top:429.34px;">0<span class="c">人</span></div>
<div class="td dk" style="left:711.4px;top:429.34px;"><span class="c">正常</span></div>
<div class="btn" style="left:730.2px;top:428.14px;width:33.9px"><span class="cb">调整团队</span></div>
<div class="btn" style="left:766.4px;top:428.14px;width:44.2px"><span class="cb">线下充值</span>VIP</div>
<div class="btn" style="left:812.5px;top:428.14px;width:33.8px"><span class="cb">余额充值</span></div>
<div class="btn" style="left:848.6px;top:428.14px;width:40.2px"><span class="cb">信用分充值</span></div>
<div class="btn" style="left:891.0px;top:428.14px;width:33.9px"><span class="cb">资金明细</span></div>
<div class="btn" style="left:927.1px;top:428.14px;width:39.9px"><span class="cb">信用分明细</span></div>
<div class="btn" style="left:969.2px;top:428.14px;width:33.9px"><span class="cb">详细信息</span></div>
<div class="td" style="left:108.5px;top:449.08px;">4660</div>
<div class="td" style="left:159.6px;top:449.08px;transform:scaleX(0.9684);transform-origin:0 0;">1CD3B24E-2E45-4675-B4FE-46DD5D751077</div>
<div class="td" style="left:356.5px;top:449.08px;">88<span class="c">赚</span>-1CD3B24E-2E45-</div>
<div class="td" style="left:484.8px;top:449.08px;"><span class="c">会员</span></div>
<div class="td" style="left:516.6px;top:449.08px;">0.00<span class="c">元</span></div>
<div class="td" style="left:554.5px;top:449.08px;">0.00<span class="c">元</span></div>
<div class="td" style="left:591.6px;top:449.08px;">300</div>
<div class="td" style="left:617.6px;top:449.08px;">2020-06-09 10:40</div>
<div class="td lnk" style="left:679.2px;top:449.08px;">0<span class="c">人</span></div>
<div class="td dk" style="left:711.4px;top:449.08px;"><span class="c">正常</span></div>
<div class="btn" style="left:730.2px;top:447.88px;width:33.9px"><span class="cb">调整团队</span></div>
<div class="btn" style="left:766.4px;top:447.88px;width:44.2px"><span class="cb">线下充值</span>VIP</div>
<div class="btn" style="left:812.5px;top:447.88px;width:33.8px"><span class="cb">余额充值</span></div>
<div class="btn" style="left:848.6px;top:447.88px;width:40.2px"><span class="cb">信用分充值</span></div>
<div class="btn" style="left:891.0px;top:447.88px;width:33.9px"><span class="cb">资金明细</span></div>
<div class="btn" style="left:927.1px;top:447.88px;width:39.9px"><span class="cb">信用分明细</span></div>
<div class="btn" style="left:969.2px;top:447.88px;width:33.9px"><span class="cb">详细信息</span></div>
<div class="td" style="left:108.5px;top:468.82px;">4659</div>
<div class="td" style="left:159.6px;top:468.82px;transform:scaleX(0.9712);transform-origin:0 0;">D8FAA852-8403-42E9-A9FE-59B5E3D4FD41</div>
<div class="td" style="left:356.5px;top:468.82px;">88<span class="c">赚</span>-D8FAA852-8403-</div>
<div class="td" style="left:484.8px;top:468.82px;"><span class="c">会员</span></div>
<div class="td" style="left:516.6px;top:468.82px;">0.00<span class="c">元</span></div>
<div class="td" style="left:554.5px;top:468.82px;">0.00<span class="c">元</span></div>
<div class="td" style="left:591.6px;top:468.82px;">300</div>
<div class="td" style="left:617.6px;top:468.82px;">2020-06-09 09:14</div>
<div class="td lnk" style="left:679.2px;top:468.82px;">0<span class="c">人</span></div>
<div class="td dk" style="left:711.4px;top:468.82px;"><span class="c">正常</span></div>
<div class="btn" style="left:730.2px;top:467.62px;width:33.9px"><span class="cb">调整团队</span></div>
<div class="btn" style="left:766.4px;top:467.62px;width:44.2px"><span class="cb">线下充值</span>VIP</div>
<div class="btn" style="left:812.5px;top:467.62px;width:33.8px"><span class="cb">余额充值</span></div>
<div class="btn" style="left:848.6px;top:467.62px;width:40.2px"><span class="cb">信用分充值</span></div>
<div class="btn" style="left:891.0px;top:467.62px;width:33.9px"><span class="cb">资金明细</span></div>
<div class="btn" style="left:927.1px;top:467.62px;width:39.9px"><span class="cb">信用分明细</span></div>
<div class="btn" style="left:969.2px;top:467.62px;width:33.9px"><span class="cb">详细信息</span></div>
</div>
<div class="a" style="left:0;top:0;width:1024px;height:24px;background:#438eb9"></div>
<svg class="a" style="left:11.6px;top:6.6px" width="11.5" height="8.8" viewBox="0 0 11.5 8.8"><path d="M1.8 7 C1 4 3.2 1.3 7.2 1.1 C8.7 1.1 10 0.8 10.9 0.2 C11.4 3.8 10.3 7.4 5.8 7.7 C4.3 7.8 3 7.4 1.8 7 Z" fill="#fff"/><path d="M0.5 8.3 L2.6 6.6" stroke="#fff" stroke-width="0.9"/><path d="M2.8 6.2 C4.3 4.6 6.2 3.6 8.2 3.1" stroke="#8fb8d6" stroke-width="0.55" fill="none"/></svg>
<div class="a" style="left:26.2px;top:5.5px;font-size:10.67px;line-height:12px;color:#fff;white-space:nowrap">任务系统</div>
<div class="a" style="left:888px;top:0;width:125px;height:23.3px;background:#62a8d1"></div>
<div class="a" style="left:936px;top:0;width:0.8px;height:23.3px;background:#a3cbe6"></div>
<div class="a" style="left:891.8px;top:7.6px;font-size:6.93px;line-height:8px;color:#fff;white-space:nowrap">清理缓存</div>
<svg class="a" style="left:925px;top:10.3px" width="5" height="3" viewBox="0 0 5 3"><path d="M0 0 H5 L2.5 3 Z" fill="#fff"/></svg>
<div class="a" style="left:941px;top:1.5px;width:21.5px;height:21.5px;border-radius:50%;background:#fff"></div>
<svg class="a" style="left:942.6px;top:3.1px" width="18.3" height="18.3" viewBox="0 0 20 20"><defs><clipPath id="cc"><circle cx="10" cy="10" r="10"/></clipPath></defs><g clip-path="url(#cc)"><rect width="20" height="20" fill="#efefef"/><path d="M3.5 14 C2.5 8 3.5 2.5 10 2.2 C16 2.2 17.5 7 17 13 C16.5 15 15.5 16.5 14.5 17 C15 12 14 8.5 11 8 C8 8 6 10 6 14 Z" fill="#7a7a7a"/><path d="M7 5 C9 3.5 13 3.5 15 6 C13 5 9 5 7 7 Z" fill="#555"/><ellipse cx="10.3" cy="13" rx="4" ry="5" fill="#e4e4e4"/><path d="M7.8 11.6 H9.4 M11.4 11.6 H13" stroke="#777" stroke-width="0.8"/><path d="M14.5 15 C15 17 16 19 17 20 H13 Z" fill="#9a9a9a"/></g></g></svg>
<div class="a" style="left:969.2px;top:2.8px;font-size:6.1px;line-height:8px;color:#fff;white-space:nowrap;top:3.3px">欢迎光临,</div>
<div class="a" style="left:969.2px;top:11.7px;font-size:7.7px;line-height:8px;color:#fff;white-space:nowrap">admin</div>
<svg class="a" style="left:1001.2px;top:10.8px" width="5" height="3" viewBox="0 0 5 3"><path d="M0 0 H5 L2.5 3 Z" fill="#fff"/></svg>
<div id="vs"><div id="vthumb"></div>
<svg class="a" style="left:2px;top:3px" width="5" height="3" viewBox="0 0 5 3"><path d="M0 3 H5 L2.5 0 Z" fill="#a3a3a3"/></svg>
<svg class="a" style="left:2px;top:447px" width="5" height="3" viewBox="0 0 5 3"><path d="M0 0 H5 L2.5 3 Z" fill="#505050"/></svg>
</div>
<div id="foot"></div>
<div class="a" style="left:530.3px;top:549.7px;font-size:7.4px;letter-spacing:0.08px;line-height:9px;color:#5d97cc;white-space:nowrap">© 任务系统 - 源码来自网商源码：www.hnymwl.com</div>
<div class="a" style="left:1009px;top:547.6px;width:14px;height:13px;background:#404040"></div>
<svg class="a" style="left:1013px;top:551px" width="6" height="6" viewBox="0 0 6 6"><path d="M0.8 3 L3 1 L5.2 3 M0.8 5.2 L3 3.2 L5.2 5.2" fill="none" stroke="#fff" stroke-width="0.9"/></svg>
</body></html>
